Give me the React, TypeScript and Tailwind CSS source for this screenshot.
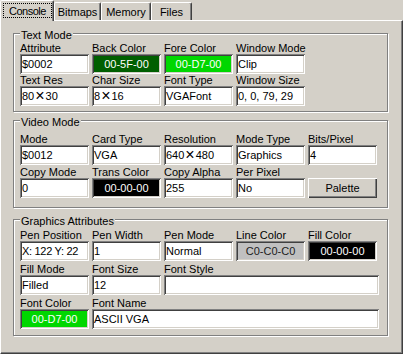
import type { ReactNode } from 'react';

// classic 3d edges
const sunken =
  'shadow-[inset_1px_1px_0_#808080,inset_-1px_-1px_0_#ffffff,inset_2px_2px_0_#404040,inset_-2px_-2px_0_#d4d0c8]';
const raised =
  'shadow-[inset_1px_1px_0_#ffffff,inset_-1px_-1px_0_#404040,inset_-2px_-2px_0_#808080]';

function Field({
  label,
  children,
  w = 'w-[69px]',
  box = 'bg-white text-black justify-start pl-[2px]',
}: {
  label: string;
  children?: ReactNode;
  w?: string;
  box?: string;
}) {
  return (
    <div className={`flex flex-col ${w}`}>
      <div className="h-[12px] whitespace-nowrap leading-[12px]">{label}</div>
      <div className={`flex h-[20px] items-center overflow-hidden whitespace-nowrap ${sunken} ${box}`}>
        {children}
      </div>
    </div>
  );
}

function Group({ title, className, children }: { title: string; className: string; children: ReactNode }) {
  return (
    <div
      className={`relative ml-[12px] w-[375px] border border-[#808080] pl-[6px] shadow-[inset_1px_1px_0_#ffffff,1px_1px_0_#ffffff] ${className}`}
    >
      <span className="absolute left-[6px] top-[-5px] bg-[#d4d0c8] px-[1px] leading-[12px]">{title}</span>
      {children}
    </div>
  );
}

function Tab({ label, w }: { label: string; w: string }) {
  return (
    <div
      className={`flex h-[18px] items-center justify-center rounded-t-[2px] border-l border-t border-r border-white border-r-[#404040] shadow-[inset_-1px_0_0_#808080] ${w}`}
    >
      {label}
    </div>
  );
}

const times = <span className="mx-[1px] text-[16px] leading-none">×</span>;

export default function App() {
  return (
    <div className="flex h-[354px] w-[403px] flex-col overflow-hidden bg-[#d4d0c8] font-['Liberation_Sans',Arial,sans-serif] text-[11px] leading-[12px] text-black">
      {/* tabs */}
      <div className="flex h-[20px] items-end">
        <div className="relative z-10 -mb-px h-[21px] w-[54px] rounded-t-[2px] border-l border-t border-r border-white border-r-[#404040] bg-[#d4d0c8] pl-[2px] pt-[2px] shadow-[inset_-1px_0_0_#808080]">
          <div className="flex h-[15px] w-[49px] items-center justify-center border border-dotted border-black tracking-[-0.5px]">
            Console
          </div>
        </div>
        <Tab label="Bitmaps" w="w-[47px]" />
        <Tab label="Memory" w="w-[50px]" />
        <Tab label="Files" w="w-[41px]" />
      </div>

      {/* panel */}
      <div className="flex-1 border-l border-t border-r border-b border-white border-r-[#404040] border-b-[#404040] shadow-[inset_-1px_-1px_0_#808080]">
        <Group title="Text Mode" className="mt-[12px] pt-[8px] pb-[5px]">
          <div className="flex flex-col">
            <div className="flex gap-[3px]">
              <Field label="Attribute">$0002</Field>
              <Field label="Back Color" box="bg-[#005f00] text-white justify-center">
                00-5F-00
              </Field>
              <Field label="Fore Color" box="bg-[#00d700] text-white justify-center">
                00-D7-00
              </Field>
              <Field label="Window Mode">Clip</Field>
            </div>
            <div className="flex gap-[3px]">
              <Field label="Text Res">80{times}30</Field>
              <Field label="Char Size">8{times}16</Field>
              <Field label="Font Type">VGAFont</Field>
              <Field label="Window Size">0, 0, 79, 29</Field>
            </div>
          </div>
        </Group>

        <Group title="Video Mode" className="mt-[8px] pt-[12px] pb-[9px]">
          <div className="flex flex-col gap-[1px]">
            <div className="flex gap-[3px]">
              <Field label="Mode">$0012</Field>
              <Field label="Card Type">VGA</Field>
              <Field label="Resolution">640{times}480</Field>
              <Field label="Mode Type">Graphics</Field>
              <Field label="Bits/Pixel">4</Field>
            </div>
            <div className="flex gap-[3px]">
              <Field label="Copy Mode">0</Field>
              <Field label="Trans Color" box="bg-black text-white justify-center">
                00-00-00
              </Field>
              <Field label="Copy Alpha">255</Field>
              <Field label="Per Pixel">No</Field>
              <div className="flex w-[69px] flex-col">
                <div className="h-[12px]" />
                <button className={`flex h-[20px] items-center justify-center bg-[#d4d0c8] ${raised}`}>
                  Palette
                </button>
              </div>
            </div>
          </div>
        </Group>

        <Group title="Graphics Attributes" className="mt-[11px] pt-[9px] pb-[6px]">
          <div className="flex flex-col gap-[2px]">
            <div className="flex gap-[3px]">
              <Field label="Pen Position" box="bg-white text-black justify-start pl-[2px] tracking-[-0.3px]">
                X: 122 Y: 22
              </Field>
              <Field label="Pen Width">1</Field>
              <Field label="Pen Mode">Normal</Field>
              <Field label="Line Color" box="bg-[#c0c0c0] text-[#202020] justify-center">
                C0-C0-C0
              </Field>
              <Field label="Fill Color" box="bg-black text-white justify-center">
                00-00-00
              </Field>
            </div>
            <div className="flex gap-[3px]">
              <Field label="Fill Mode">Filled</Field>
              <Field label="Font Size">12</Field>
              <Field label="Font Style" w="w-[215px]" />
            </div>
            <div className="flex gap-[3px]">
              <Field label="Font Color" box="bg-[#00d700] text-white justify-center">
                00-D7-00
              </Field>
              <Field label="Font Name" w="w-[287px]">
                ASCII VGA
              </Field>
            </div>
          </div>
        </Group>
      </div>
    </div>
  );
}
